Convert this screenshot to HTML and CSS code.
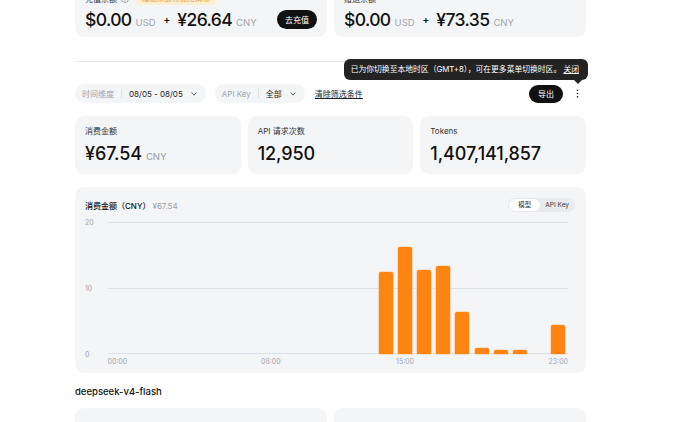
FILE: index.html
```html
<!DOCTYPE html>
<html lang="zh-CN">
<head>
    <meta charset="UTF-8">
    <meta name="viewport" content="width=device-width, initial-scale=1.0">
    <title>用量信息</title>
    <link rel="stylesheet" href="styles.css">
</head>
<body>
    <div class="page">
        <section class="balances">
            <div class="card balance">
                <div class="balance-label">
                    充值余额
                    <svg class="info" viewBox="0 0 10 10" width="8" height="8"><circle cx="5" cy="5" r="4.3" fill="none" stroke="#888" stroke-width="0.9"/><path d="M5 4.4v3" stroke="#888" stroke-width="0.9"/><circle cx="5" cy="2.9" r="0.55" fill="#888"/></svg>
                    <span class="badge">赠送余额将优先扣除</span>
                </div>
                <div class="balance-row">
                    <div class="sum">
                        <span class="amount">$0.00</span><span class="unit">USD</span>
                        <span class="plus">+</span>
                        <span class="amount">¥26.64</span><span class="unit">CNY</span>
                    </div>
                    <button class="btn-dark">去充值</button>
                </div>
            </div>
            <div class="card balance">
                <div class="balance-label">赠送余额</div>
                <div class="balance-row">
                    <div class="sum">
                        <span class="amount">$0.00</span><span class="unit">USD</span>
                        <span class="plus">+</span>
                        <span class="amount">¥73.35</span><span class="unit">CNY</span>
                    </div>
                </div>
            </div>
        </section>

        <hr class="divider">

        <div class="toolbar">
            <div class="filters">
                <div class="pill">
                    <span class="pill-label">时间维度</span>
                    <span class="pill-sep"></span>
                    <span class="pill-value">08/05 - 08/05</span>
                    <svg class="chev" viewBox="0 0 8 5" width="6" height="4"><path d="M1 1l3 3 3-3" fill="none" stroke="#333" stroke-width="1.1" stroke-linecap="round" stroke-linejoin="round"/></svg>
                </div>
                <div class="pill">
                    <span class="pill-label">API Key</span>
                    <span class="pill-sep"></span>
                    <span class="pill-value">全部</span>
                    <svg class="chev" viewBox="0 0 8 5" width="6" height="4"><path d="M1 1l3 3 3-3" fill="none" stroke="#333" stroke-width="1.1" stroke-linecap="round" stroke-linejoin="round"/></svg>
                </div>
                <a class="clear">清除筛选条件</a>
            </div>
            <div class="actions">
                <div class="tooltip">已为你切换至本地时区（GMT+8），可在更多菜单切换时区。 <u>关闭</u></div>
                <button class="btn-dark">导出</button>
                <button class="kebab">
                    <svg viewBox="0 0 4 12" width="3" height="9"><circle cx="2" cy="1.6" r="1.1" fill="#222"/><circle cx="2" cy="6" r="1.1" fill="#222"/><circle cx="2" cy="10.4" r="1.1" fill="#222"/></svg>
                </button>
            </div>
        </div>

        <section class="stats">
            <div class="card stat">
                <div class="stat-label">消费金额</div>
                <div class="stat-value">¥67.54<span class="unit">CNY</span></div>
            </div>
            <div class="card stat">
                <div class="stat-label">API 请求次数</div>
                <div class="stat-value">12,950</div>
            </div>
            <div class="card stat">
                <div class="stat-label">Tokens</div>
                <div class="stat-value">1,407,141,857</div>
            </div>
        </section>

        <section class="card chart">
            <div class="chart-head">
                <div class="chart-title">消费金额（CNY）<span class="muted">¥67.54</span></div>
                <div class="toggle">
                    <span class="toggle-item active">模型</span>
                    <span class="toggle-item">API Key</span>
                </div>
            </div>
            <div class="chart-body">
                <div class="y-axis">
                    <span>20</span>
                    <span>10</span>
                    <span>0</span>
                </div>
                <div class="plot">
                    <div class="grid-line top"></div>
                    <div class="grid-line mid"></div>
                    <div class="grid-line bottom"></div>
                    <div class="bars">
                        <div class="slot"></div><div class="slot"></div><div class="slot"></div><div class="slot"></div>
                        <div class="slot"></div><div class="slot"></div><div class="slot"></div><div class="slot"></div>
                        <div class="slot"></div><div class="slot"></div><div class="slot"></div><div class="slot"></div>
                        <div class="slot"></div><div class="slot"></div>
                        <div class="slot"><div class="bar" style="height: 62%"></div></div>
                        <div class="slot"><div class="bar" style="height: 81%"></div></div>
                        <div class="slot"><div class="bar" style="height: 63.5%"></div></div>
                        <div class="slot"><div class="bar" style="height: 66.5%"></div></div>
                        <div class="slot"><div class="bar" style="height: 31.5%"></div></div>
                        <div class="slot"><div class="bar" style="height: 4.5%"></div></div>
                        <div class="slot"><div class="bar" style="height: 3.4%"></div></div>
                        <div class="slot"><div class="bar" style="height: 3.1%"></div></div>
                        <div class="slot"></div>
                        <div class="slot"><div class="bar" style="height: 21.7%"></div></div>
                    </div>
                </div>
                <div class="x-axis">
                    <span class="x0">00:00</span>
                    <span class="x8">08:00</span>
                    <span class="x15">15:00</span>
                    <span class="x23">23:00</span>
                </div>
            </div>
        </section>

        <h3 class="model-name">deepseek-v4-flash</h3>
        <section class="model-cards">
            <div class="card model-card"></div>
            <div class="card model-card"></div>
        </section>
    </div>
</body>
</html>
```

FILE: styles.css
```css
:root {
    --card: #f4f5f7;
    --text: #111;
    --muted: #a3a7ae;
    --orange: #ff8410;
    --grid: #dde1ea;
}
* { box-sizing: border-box; margin: 0; padding: 0; }
body {
    font-family: Inter, "Noto Sans CJK SC", sans-serif;
    color: var(--text); background: #fff;
    overflow: hidden;
}
.page { width: 511px; margin-left: 75px; }
.card { background: var(--card); border-radius: 9px; }

/* balances */
.balances {
    display: grid; grid-template-columns: 252px 1fr; gap: 7px;
    margin-top: -17px;
}
.balance { padding: 10px 10px 7px; }
.balance-label {
    display: flex; align-items: center; gap: 4px;
    font-size: 8px; line-height: 12px; margin-bottom: 3px; color: #333;
}
.badge {
    background: #fff0d2; color: #e59a2c; border-radius: 3px;
    padding: 0 6px; margin-left: 3px; font-size: 7.5px;
}
.balance-row { display: flex; align-items: center; height: 22px; }
.sum { display: flex; align-items: baseline; }
.amount { font-size: 17.5px; font-weight: 500; letter-spacing: -0.6px; }
.unit { font-size: 9.5px; color: var(--muted); margin-left: 4px; }
.plus { align-self: center; font-size: 10px; font-weight: 600; line-height: 10px; margin: 0 7px 0 8px; }
.btn-dark {
    margin-left: auto; background: #111; color: #fff; border: none;
    border-radius: 10px; font-family: inherit; font-size: 8px;
    height: 19px; padding: 0 8px; cursor: pointer;
}

.divider { border: none; border-top: 1px solid #ececee; margin-top: 24px; }

/* toolbar */
.toolbar {
    display: flex; align-items: center; justify-content: space-between;
    margin-top: 22px; height: 19px;
}
.filters { display: flex; align-items: center; gap: 9px; }
.pill {
    display: flex; align-items: center; height: 19px;
    background: var(--card); border-radius: 10px; padding: 0 9px 0 7px;
    font-size: 8px;
}
.pill-label { color: #a0a4ab; }
.pill-sep { width: 1px; height: 9px; background: #dcdee2; margin: 0 7px; }
.pill-value { color: #222; }
.chev { margin-left: 8px; }
.clear { font-size: 8px; color: #222; text-decoration: underline; margin-left: 1px; }

.actions { position: relative; display: flex; align-items: center; gap: 8px; margin-right: 3px; }
.actions .btn-dark { height: 18px; padding: 0 9px; }
.kebab {
    width: 12px; height: 18px; border: none; background: none;
    display: flex; align-items: center; justify-content: center;
}
.tooltip {
    position: absolute; right: -5px; bottom: calc(100% + 5px);
    background: #232323; color: #fff; white-space: nowrap;
    font-size: 7.8px; line-height: 21px; padding: 0 9px 0 7px;
    border-radius: 6px;
}
.tooltip u { text-underline-offset: 1px; }
.tooltip::after {
    content: ""; position: absolute; right: 6px; top: 100%;
    border: 4px solid transparent; border-top-color: #232323;
    border-bottom: none;
}

/* stats */
.stats {
    display: grid; grid-template-columns: repeat(3, 1fr); gap: 7px;
    margin-top: 13px;
}
.stat { padding: 9px 10px 7px; }
.stat-label { font-size: 8px; line-height: 12px; color: #333; margin-bottom: 6px; }
.stat-value { font-size: 18px; font-weight: 500; line-height: 21px; letter-spacing: -0.1px; }

/* chart */
.chart { margin-top: 13px; padding: 11px 11px 6px 10px; }
.chart-head { display: flex; align-items: center; justify-content: space-between; height: 14px; }
.chart-title { font-size: 8px; font-weight: 500; }
.chart-title .muted { color: #999da4; font-weight: 400; margin-left: 2px; }
.toggle {
    display: flex; align-items: center; background: #e9ebef;
    border-radius: 7px; padding: 1px; height: 14px;
}
.toggle-item { font-size: 6.5px; padding: 0 5px; line-height: 12px; color: #333; }
.toggle-item.active { background: #fff; border-radius: 6px; padding: 0 9px; box-shadow: 0 0 2px rgba(0,0,0,0.06); }

.chart-body {
    display: grid; grid-template-columns: 22.5px 1fr;
    margin: 10px 7px 0 0;
}
.y-axis {
    display: flex; flex-direction: column; justify-content: space-between;
    height: 132px; font-size: 7px; color: var(--muted);
}
.y-axis span { height: 0; display: flex; align-items: center; }
.plot { position: relative; height: 132px; }
.grid-line { position: absolute; left: 0; right: 0; height: 1px; background: var(--grid); }
.grid-line.top { top: 0; }
.grid-line.mid { top: 50%; }
.grid-line.bottom { bottom: 0; }
.bars { position: absolute; inset: 0; display: flex; align-items: flex-end; }
.slot { flex: 1; height: 100%; display: flex; align-items: flex-end; justify-content: center; }
.bar {
    width: 14px; background: var(--orange);
    border-radius: 2px 2px 0 0;
    box-shadow: 0 0 0 0.6px rgba(255, 170, 90, 0.6);
}
.x-axis {
    grid-column: 2; display: grid; grid-template-columns: repeat(24, 1fr);
    font-size: 7px; color: var(--muted); line-height: 10px; margin-top: 3px;
}
.x-axis span { justify-self: center; white-space: nowrap; }
.x0 { grid-column: 1; }
.x8 { grid-column: 9; }
.x15 { grid-column: 16; }
.x23 { grid-column: 24; }

.model-name { font-size: 9.5px; font-weight: 500; line-height: 12px; margin-top: 13px; }
.model-cards {
    display: grid; grid-template-columns: 252px 1fr; gap: 7px;
    margin-top: 10px;
}
.model-card { height: 80px; }
```
